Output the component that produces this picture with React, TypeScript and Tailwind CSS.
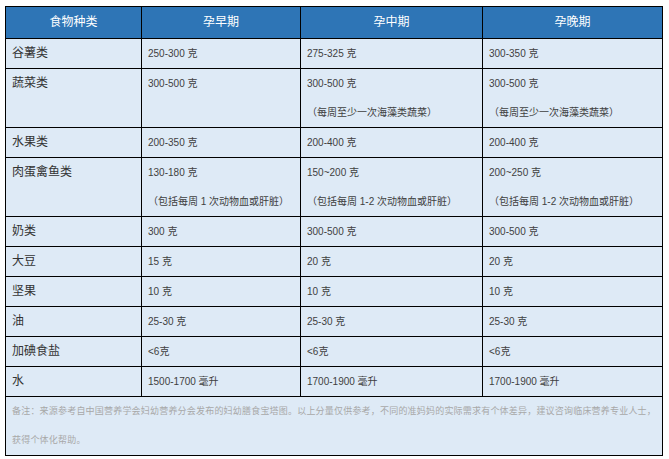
import React from 'react';

type Row = {
  name: string;
  early: string[];
  mid: string[];
  late: string[];
};

const rows: Row[] = [
  { name: '谷薯类', early: ['250-300 克'], mid: ['275-325 克'], late: ['300-350 克'] },
  {
    name: '蔬菜类',
    early: ['300-500 克'],
    mid: ['300-500 克', '（每周至少一次海藻类蔬菜）'],
    late: ['300-500 克', '（每周至少一次海藻类蔬菜）'],
  },
  { name: '水果类', early: ['200-350 克'], mid: ['200-400 克'], late: ['200-400 克'] },
  {
    name: '肉蛋禽鱼类',
    early: ['130-180 克', '（包括每周 1 次动物血或肝脏）'],
    mid: ['150~200 克', '（包括每周 1-2 次动物血或肝脏）'],
    late: ['200~250 克', '（包括每周 1-2 次动物血或肝脏）'],
  },
  { name: '奶类', early: ['300 克'], mid: ['300-500 克'], late: ['300-500 克'] },
  { name: '大豆', early: ['15 克'], mid: ['20 克'], late: ['20 克'] },
  { name: '坚果', early: ['10 克'], mid: ['10 克'], late: ['10 克'] },
  { name: '油', early: ['25-30 克'], mid: ['25-30 克'], late: ['25-30 克'] },
  { name: '加碘食盐', early: ['<6克'], mid: ['<6克'], late: ['<6克'] },
  { name: '水', early: ['1500-1700 毫升'], mid: ['1700-1900 毫升'], late: ['1700-1900 毫升'] },
];

const font = { fontFamily: '"Liberation Sans", "Noto Sans CJK SC", sans-serif' };

const ValueCell = ({ lines }: { lines: string[] }) => (
  <td className="border border-black px-[6px] align-top text-[10px] leading-[29px] text-[#3f3f3f]">
    {lines.map((l, i) => (
      <div key={i}>{l}</div>
    ))}
  </td>
);

export default function App() {
  return (
    <div className="bg-white w-[669px] h-[459px] pt-[6px] pl-[5px]" style={font}>
      <table className="table-fixed border-collapse w-[657px]">
        <colgroup>
          <col className="w-[136px]" />
          <col className="w-[159px]" />
          <col className="w-[182px]" />
          <col className="w-[180px]" />
        </colgroup>
        <thead>
          <tr className="bg-[#2e75b6] text-white text-[12px] leading-[31px]">
            <th className="border border-black font-normal">食物种类</th>
            <th className="border border-black font-normal">孕早期</th>
            <th className="border border-black font-normal">孕中期</th>
            <th className="border border-black font-normal">孕晚期</th>
          </tr>
        </thead>
        <tbody className="bg-[#deeaf6]">
          {rows.map((r) => (
            <tr key={r.name}>
              <td className="border border-black px-[6px] align-top text-[12px] leading-[29px] text-[#333333]">
                {r.name}
              </td>
              <ValueCell lines={r.early} />
              <ValueCell lines={r.mid} />
              <ValueCell lines={r.late} />
            </tr>
          ))}
          <tr>
            <td
              colSpan={4}
              className="border border-black px-[6px] align-top text-[9px] tracking-[0.2px] leading-[29px] text-[#a8a8a8]"
            >
              <div>
                备注：来源参考自中国营养学会妇幼营养分会发布的妇幼膳食宝塔图。以上分量仅供参考，不同的准妈妈的实际需求有个体差异，建议咨询临床营养专业人士，
              </div>
              <div>获得个体化帮助。</div>
            </td>
          </tr>
        </tbody>
      </table>
    </div>
  );
}
